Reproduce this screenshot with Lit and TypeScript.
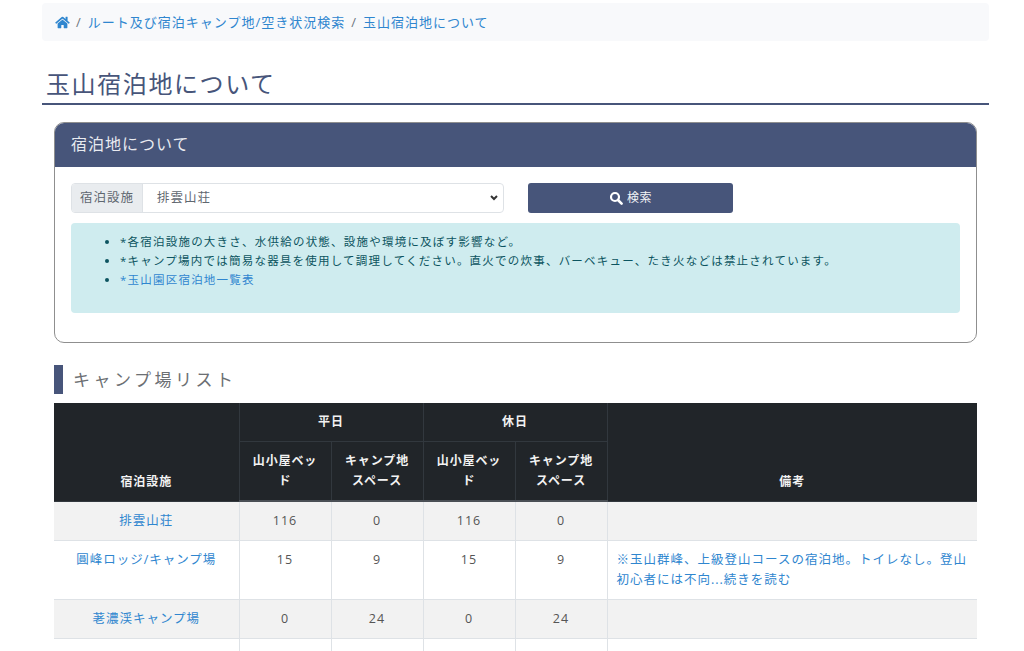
import { LitElement, html, css, nothing } from 'lit';
import { customElement } from 'lit/decorators.js';

type Row = { name: string; bed: string; camp: string; note?: string };

const rows: Row[] = [
  { name: '排雲山荘', bed: '116', camp: '0' },
  {
    name: '圓峰ロッジ/キャンプ場',
    bed: '15',
    camp: '9',
    note: '※玉山群峰、上級登山コースの宿泊地。トイレなし。登山初心者には不向...続きを読む',
  },
  { name: '荖濃渓キャンプ場', bed: '0', camp: '24' },
  { name: '楽楽ロッジ', bed: '12', camp: '0' },
];

@customElement('app-root')
export class AppRoot extends LitElement {
  static styles = css`
    :host {
      display: block;
      height: 651px;
      overflow: hidden;
      background: #fff;
      color: #212529;
      font-family: 'Open Sans', 'Noto Sans CJK JP', sans-serif;
      font-size: 13px;
      line-height: 20px;
      letter-spacing: 1px;
    }

    a {
      color: #2f86cf;
      text-decoration: none;
    }

    .container {
      width: 947px;
      margin-left: 42px;
      padding-top: 3px;
    }

    .breadcrumb {
      display: flex;
      align-items: center;
      height: 38px;
      padding-left: 13px;
      background: #f8f9fb;
      border-radius: 4px;
    }

    .breadcrumb svg {
      width: 15px;
      height: 13px;
      fill: #2f86cf;
    }

    .sep {
      margin: 0 6px;
      color: #6c757d;
    }

    h1 {
      margin: 24px 0 17px;
      padding: 0 0 0 4px;
      height: 38px;
      border-bottom: 2px solid #47557a;
      color: #47557a;
      font-size: 24px;
      font-weight: 400;
      line-height: 38px;
      letter-spacing: 1.6px;
      box-sizing: content-box;
    }

    .content {
      margin: 0 12px;
    }

    .card {
      height: 221px;
      box-sizing: border-box;
      border: 1px solid #8f8f8f;
      border-radius: 10px;
      overflow: hidden;
    }

    .card-header {
      height: 45px;
      margin: -1px -1px 0;
      padding-left: 17px;
      background: #47557a;
      color: #e8eaf0;
      font-size: 16px;
      line-height: 45px;
    }

    .card-body {
      padding: 16px 16px 0;
    }

    .search {
      display: flex;
      align-items: stretch;
      height: 30px;
    }

    .group {
      display: flex;
      width: 433px;
      border: 1px solid #dee2e6;
      border-radius: 4px;
      box-sizing: border-box;
      overflow: hidden;
    }

    .group-label {
      width: 70px;
      background: #e9ecef;
      border-right: 1px solid #dee2e6;
      color: #5f6770;
      font-size: 12.5px;
      line-height: 28px;
      text-align: center;
    }

    .select {
      display: flex;
      flex: 1;
      align-items: center;
      justify-content: space-between;
      padding: 0 5px 0 14px;
      color: #5f6770;
      font-size: 12.5px;
    }

    .select svg {
      width: 8px;
      height: 6px;
      fill: none;
      stroke: #333;
      stroke-width: 2;
    }

    .btn {
      display: flex;
      align-items: center;
      justify-content: center;
      gap: 4px;
      width: 205px;
      margin-left: 24px;
      background: #47557a;
      border-radius: 3px;
      color: #f2f3f6;
      font-size: 12px;
      letter-spacing: 0.4px;
    }

    .btn svg {
      width: 14px;
      height: 14px;
    }

    .alert {
      height: 90px;
      margin-top: 10px;
      padding: 9px 0 0 32px;
      background: #cfecef;
      border-radius: 4px;
      box-sizing: border-box;
      color: #0c5460;
      font-size: 11.5px;
      letter-spacing: 1.22px;
    }

    .alert ul {
      margin: 0;
      padding-left: 17px;
    }

    .alert li {
      line-height: 19px;
    }

    .section-title {
      height: 29px;
      margin: 22px 0 9px;
      padding-left: 10px;
      border-left: 9px solid #47557a;
      color: #6c6f73;
      font-size: 17px;
      font-weight: 400;
      line-height: 29px;
      letter-spacing: 3.5px;
    }

    table {
      width: 923px;
      table-layout: fixed;
      border-collapse: collapse;
    }

    th,
    td {
      padding: 9px;
      text-align: center;
      border: 1px solid #dee2e6;
    }

    th {
      background: #212529;
      border-color: #32383e;
      color: #f2f2f2;
      font-size: 12px;
      font-weight: 700;
      letter-spacing: 0.9px;
      vertical-align: bottom;
    }

    thead tr:first-child th {
      border-top: none;
    }

    thead tr:last-child th {
      border-bottom: 2px solid #4a4f55;
    }

    th:first-child,
    td:first-child {
      border-left: none;
    }

    th:last-child,
    td:last-child {
      border-right: none;
    }

    td {
      color: #555;
      font-size: 12.5px;
      vertical-align: top;
    }

    tbody tr:nth-child(odd) td {
      background: #f2f2f2;
    }

    .note {
      text-align: left;
    }
  `;

  private renderRow(row: Row) {
    return html`
      <tr>
        <td><a href="#">${row.name}</a></td>
        <td>${row.bed}</td>
        <td>${row.camp}</td>
        <td>${row.bed}</td>
        <td>${row.camp}</td>
        <td class="note">${row.note ? html`<a href="#">${row.note}</a>` : nothing}</td>
      </tr>
    `;
  }

  render() {
    return html`
      <div class="container">
        <nav class="breadcrumb">
          <svg viewBox="0 0 576 512" aria-hidden="true">
            <path
              d="M280.37 148.26 96 300.11V464a16 16 0 0 0 16 16l112.06-.29a16 16 0 0 0 15.92-16V368a16 16 0 0 1 16-16h64a16 16 0 0 1 16 16v95.64a16 16 0 0 0 16 16.05L464 480a16 16 0 0 0 16-16V300L295.67 148.26a12.19 12.19 0 0 0-15.3 0zM571.6 251.47 488 182.56V44.05a12 12 0 0 0-12-12h-56a12 12 0 0 0-12 12v72.61L318.47 43a48 48 0 0 0-61 0L4.34 251.47a12 12 0 0 0-1.6 16.9l25.5 31A12 12 0 0 0 45.15 301l235.22-193.74a12.19 12.19 0 0 1 15.3 0L530.9 301a12 12 0 0 0 16.9-1.6l25.5-31a12 12 0 0 0-1.7-16.93z"
            />
          </svg>
          <span class="sep">/</span>
          <a href="#">ルート及び宿泊キャンプ地/空き状況検索</a>
          <span class="sep">/</span>
          <a href="#">玉山宿泊地について</a>
        </nav>

        <h1>玉山宿泊地について</h1>

        <div class="content">
          <section class="card">
            <div class="card-header">宿泊地について</div>
            <div class="card-body">
              <div class="search">
                <div class="group">
                  <div class="group-label">宿泊設施</div>
                  <div class="select">
                    <span>排雲山荘</span>
                    <svg viewBox="0 0 8 6" aria-hidden="true"><path d="M1 1l3 3 3-3" /></svg>
                  </div>
                </div>
                <div class="btn">
                  <svg viewBox="0 0 14 14" aria-hidden="true">
                    <circle cx="6" cy="6" r="4" fill="none" stroke="#fff" stroke-width="2.2" />
                    <path d="M9 9l3.6 3.6" stroke="#fff" stroke-width="2.6" stroke-linecap="round" />
                  </svg>
                  <span>検索</span>
                </div>
              </div>
              <div class="alert">
                <ul>
                  <li>*各宿泊設施の大きさ、水供給の状態、設施や環境に及ぼす影響など。</li>
                  <li>*キャンプ場内では簡易な器具を使用して調理してください。直火での炊事、バーベキュー、たき火などは禁止されています。</li>
                  <li><a href="#">*玉山園区宿泊地一覧表</a></li>
                </ul>
              </div>
            </div>
          </section>

          <h2 class="section-title">キャンプ場リスト</h2>

          <table>
            <colgroup>
              <col style="width: 185px" />
              <col style="width: 92px" />
              <col style="width: 92px" />
              <col style="width: 92px" />
              <col style="width: 92px" />
              <col />
            </colgroup>
            <thead>
              <tr>
                <th rowspan="2">宿泊設施</th>
                <th colspan="2">平日</th>
                <th colspan="2">休日</th>
                <th rowspan="2">備考</th>
              </tr>
              <tr>
                <th>山小屋ベッド</th>
                <th>キャンプ地スペース</th>
                <th>山小屋ベッド</th>
                <th>キャンプ地スペース</th>
              </tr>
            </thead>
            <tbody>${rows.map((row) => this.renderRow(row))}</tbody>
          </table>
        </div>
      </div>
    `;
  }
}

declare global {
  interface HTMLElementTagNameMap {
    'app-root': AppRoot;
  }
}
